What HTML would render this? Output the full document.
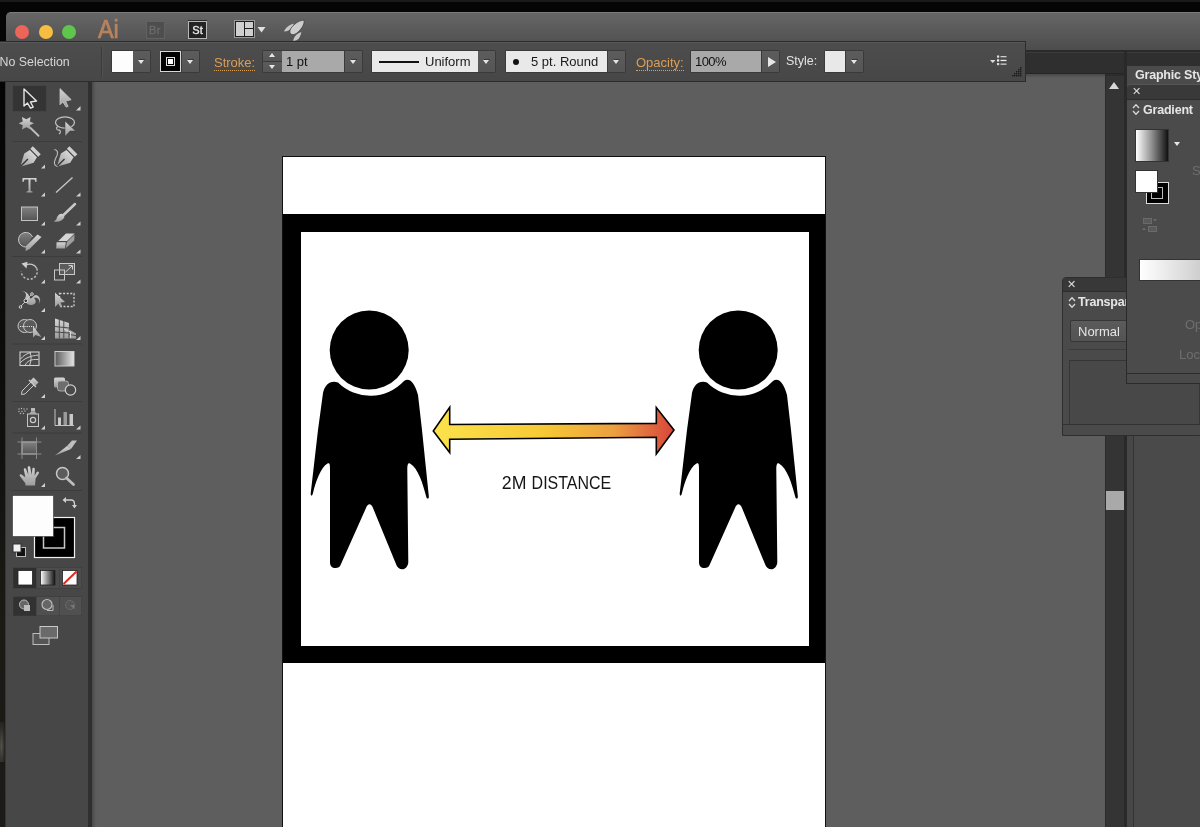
<!DOCTYPE html>
<html><head><meta charset="utf-8">
<style>
*{margin:0;padding:0;box-sizing:border-box}
html,body{width:1200px;height:827px;overflow:hidden;background:#050505;font-family:"Liberation Sans",sans-serif}
#root{position:absolute;left:0;top:0;width:1200px;height:827px;overflow:hidden;will-change:transform}
.a{position:absolute}
#title{left:6px;top:12px;width:1194px;height:38px;background:linear-gradient(#666,#4c4c4c);border-top-left-radius:5px;border-top:1px solid #7b7b7b}
.tl{width:14px;height:14px;border-radius:50%}
#ctrl{left:0;top:41px;width:1026px;height:41px;background:linear-gradient(#4d4d4d,#474747);border:1px solid #2c2c2c;border-left:none;box-shadow:inset 0 1px 0 #575757}
#tabbar{left:1026px;top:51px;width:80px;height:23px;background:#333}
#canvas{left:92px;top:74px;width:1013px;height:753px;background:#5e5e5e;box-shadow:inset 2px 2px 3px rgba(0,0,0,0.22)}
#tools{left:5px;top:82px;width:83px;height:745px;background:#474747;border-left:1px solid #363636}
.txt{color:#e2e2e2;font-size:12.5px;white-space:nowrap}
.sw{background:#fff}
.dd{background:#555;border:1px solid #333}
.grp{background:#3a3a3a;border-radius:2px}
.ddb{background:linear-gradient(#5c5c5c,#555);}
.tri{position:absolute;left:50%;top:9px;margin-left:-3.5px;width:0;height:0;border-left:3.5px solid transparent;border-right:3.5px solid transparent;border-top:4.5px solid #e6e6e6}
.ddb{box-sizing:border-box}
.nb:before{display:none}
.ddb:before{content:"";position:absolute;left:50%;top:7.5px;margin-left:-3px;width:6px;height:1px;background:#3a3a3a}
.tri.up{border-top:none;border-bottom:4.5px solid #e6e6e6}
.tri.rt{margin-left:-3px;top:6px;border-top:5px solid transparent;border-bottom:5px solid transparent;border-left:8px solid #e6e6e6;border-right:none}
.inp{background:#a9a9a9;color:#111;font-size:13px;padding:3px 0 0 4px;white-space:nowrap}
.box{background:#e9e9e9}
.dtxt{color:#1a1a1a;font-size:13px;white-space:nowrap}
.lbl{color:#dc9d55;font-size:13px;white-space:nowrap;border-bottom:1px dotted #dc9d55;line-height:15px;margin-top:1.5px}
.xx{color:#dedede;font-size:11px;line-height:14px}
.ptab{color:#e6e6e6;font-size:12.5px;font-weight:bold;white-space:nowrap;line-height:16px;letter-spacing:-0.2px}
.updn{width:7px;height:11px}
.updn:before,.updn:after{content:"";position:absolute;left:0;width:4px;height:4px;border-left:1.3px solid #ddd;border-top:1.3px solid #ddd}
.updn:before{top:1px;left:1.5px;transform:rotate(45deg)}
.updn:after{top:5px;left:1.5px;transform:rotate(-135deg)}
</style></head><body><div id="root">
<!-- title bar -->
<div class="a" style="left:0;top:0;width:1200px;height:2px;background:#1a1a1a"></div>
<div class="a" id="title"></div>
<div class="a tl" style="left:15px;top:24.5px;background:#ec6559"></div>
<div class="a tl" style="left:39px;top:24.5px;background:#f6bd42"></div>
<div class="a tl" style="left:62px;top:24.5px;background:#5fc54c"></div>
<div class="a" style="left:97.5px;top:14px;font-size:26px;color:#b9835e;-webkit-text-stroke:0.7px #b9835e;transform:scaleX(0.9);transform-origin:0 0;line-height:30px">Ai</div>
<div class="a" style="left:145.5px;top:20.5px;width:19px;height:18.5px;border:1.5px solid #626262;background:#4e4e4e;color:#6c6c6c;font-size:11px;-webkit-text-stroke:0.3px #6c6c6c;text-align:center;line-height:17px;letter-spacing:0.5px">Br</div>
<div class="a" style="left:188px;top:20.5px;width:19px;height:18.5px;border:1.5px solid #b8b8b8;background:#232323;color:#e8e8e8;font-size:11px;-webkit-text-stroke:0.35px #e8e8e8;text-align:center;line-height:16.5px;box-shadow:0 -1px 0 #2a2a2a">St</div>
<svg class="a" style="left:225px;top:14px" width="85" height="30" viewBox="225 14 85 30">
<rect x="234" y="20" width="21" height="18" fill="#9a9a9a"/>
<rect x="235" y="21" width="19" height="16" fill="#1e1e1e"/>
<rect x="236" y="22" width="8" height="14" fill="#cfcfcf"/>
<rect x="245" y="22" width="8" height="6" fill="#cfcfcf"/>
<rect x="245" y="29" width="8" height="7" fill="#cfcfcf"/>
<path d="M257.5,27 L265.5,27 L261.5,32.5 Z" fill="#e0e0e0"/>
<path d="M284,31.6 C285.5,27.5 289.5,24.5 293.8,23.8 C292.8,26.5 290.8,29 288.6,30.5 C287.2,31.2 285.6,31.6 284,31.6 Z" fill="#c8c8c8"/>
<path d="M293.2,41 C293.8,37 296.5,33.5 301.3,32 C301,35 299.6,38 297.6,39.6 C296.2,40.6 294.6,41 293.2,41 Z" fill="#c8c8c8"/>
<g transform="translate(296.5,28) rotate(-45)">
<path d="M10.8,0 C8,-3.2 3,-4.2 -2,-4 C-6,-3.7 -8.2,-2 -8.2,0 C-8.2,2 -6,3.7 -2,4 C3,4.2 8,3.2 10.8,0 Z" fill="#cdcdcd" stroke="#3e3e3e" stroke-width="0.7"/>
</g>
</svg>

<!-- canvas + right side -->
<div class="a" style="left:88px;top:74px;width:4px;height:753px;background:#2f2f2f"></div>
<div class="a" id="canvas"></div>
<div class="a" style="left:1026px;top:50px;width:174px;height:2px;background:#2a2a2a"></div>
<div class="a" style="left:1026px;top:52px;width:174px;height:22px;background:#2f2f2f;border-top:1px solid #3c3c3c;border-bottom:1px solid #262626"></div>
<div class="a" style="left:1105px;top:74px;width:19px;height:753px;background:#343434;border-left:1px solid #2c2c2c;border-top:2px solid #2c2c2c"></div>
<div class="a" style="left:1109px;top:82px;width:0;height:0;border-left:5.5px solid transparent;border-right:5.5px solid transparent;border-bottom:7px solid #d8d8d8"></div>
<div class="a" style="left:1106px;top:491px;width:18px;height:19px;background:#a9a9a9"></div>
<div class="a" style="left:1124px;top:50px;width:3px;height:777px;background:#292929"></div>
<div class="a" style="left:1127px;top:74px;width:73px;height:753px;background:#4a4a4a"></div>
<div class="a" style="left:1127px;top:383px;width:7px;height:444px;background:#474747;border-right:1px solid #333"></div>
<!-- transparency panel -->
<div class="a" style="left:1062px;top:277px;width:138px;height:159px;background:#4a4a4a;border:1px solid #2e2e2e;border-top-left-radius:4px"></div>
<div class="a" style="left:1063px;top:278px;width:137px;height:14px;background:#383838;border-top-left-radius:3px;border-bottom:1px solid #2c2c2c"></div>
<div class="a xx" style="left:1067px;top:277px">&#x2715;</div>
<svg class="a" style="left:1067.5px;top:295.5px" width="8" height="13" viewBox="0 0 8 13"><path d="M1,5 L4,1.8 L7,5 M1,8 L4,11.2 L7,8" fill="none" stroke="#d8d8d8" stroke-width="1.3"/></svg>
<div class="a ptab" style="left:1078px;top:294px">Transparency</div>
<div class="a" style="left:1070px;top:320px;width:80px;height:22px;background:linear-gradient(#5b5b5b,#535353);border:1px solid #363636;border-radius:2px;color:#e4e4e4;font-size:13px;padding:3px 0 0 7px">Normal</div>
<div class="a" style="left:1068px;top:349px;width:132px;height:1px;background:#3c3c3c"></div>
<div class="a" style="left:1069px;top:360px;width:131px;height:65px;background:#484848;border:1px solid #353535"></div>
<div class="a" style="left:1063px;top:424px;width:137px;height:11px;background:#4a4a4a;border-top:1px solid #333"></div>
<!-- gradient panel -->
<div class="a" style="left:1126px;top:66px;width:74px;height:318px;background:#4b4b4b;border-left:1px solid #2a2a2a;border-bottom:1px solid #2a2a2a"></div>
<div class="a ptab" style="left:1135px;top:67px">Graphic Styles</div>
<div class="a" style="left:1127px;top:84px;width:73px;height:16px;background:#393939;border-top-left-radius:4px;border-top:1px solid #555;border-bottom:1px solid #2c2c2c"></div>
<div class="a xx" style="left:1132px;top:84px">&#x2715;</div>
<svg class="a" style="left:1132px;top:103px" width="8" height="13" viewBox="0 0 8 13"><path d="M1,5 L4,1.8 L7,5 M1,8 L4,11.2 L7,8" fill="none" stroke="#d8d8d8" stroke-width="1.3"/></svg>
<div class="a ptab" style="left:1143px;top:102px">Gradient</div>
<div class="a" style="left:1135px;top:129px;width:34px;height:33px;background:linear-gradient(90deg,#fff 0%,#9a9a9a 45%,#111 100%);border:1px solid #333"></div>
<div class="a" style="left:1174px;top:142px;width:0;height:0;border-left:3.5px solid transparent;border-right:3.5px solid transparent;border-top:4px solid #e6e6e6"></div>
<div class="a" style="left:1146px;top:182px;width:23px;height:22px;background:#000;border:1px solid #ddd"></div>
<div class="a" style="left:1151px;top:187px;width:12px;height:12px;border:1.5px solid #bbb"></div>
<div class="a" style="left:1135px;top:170px;width:23px;height:23px;background:#fff;border:1px solid #333"></div>
<svg class="a" style="left:1140px;top:214px" width="24" height="22" viewBox="0 0 24 22">
<rect x="3.5" y="4.5" width="8" height="5" fill="#5a5a5a" stroke="#6a6a6a"/><path d="M13,5 L17,5 L15,7.5 Z" fill="#6a6a6a"/>
<rect x="8.5" y="12.5" width="8" height="5" fill="#5a5a5a" stroke="#6a6a6a"/><path d="M2,16 L6,16 L4,13.5 Z" fill="#6a6a6a"/>
</svg>
<div class="a" style="left:1192px;top:163px;color:#6e6e6e;font-size:13px">St</div>
<div class="a" style="left:1139px;top:259px;width:61px;height:22px;background:linear-gradient(90deg,#fff,#cfcfcf);border:1px solid #333;border-right:none"></div>
<div class="a" style="left:1185px;top:317px;color:#6e6e6e;font-size:13px">Op</div>
<div class="a" style="left:1179px;top:347px;color:#6e6e6e;font-size:13px">Loc</div>
<div class="a" style="left:1127px;top:373px;width:73px;height:10px;background:#4a4a4a;border-top:1px solid #2c2c2c"></div>

<!-- toolbar -->
<div class="a" style="left:0;top:82px;width:5px;height:745px;background:linear-gradient(#050505 0%,#0d0d0b 40%,#1a1914 70%,#1c1b17 100%)"></div>
<div class="a" style="left:0;top:722px;width:5px;height:40px;background:radial-gradient(ellipse at 30% 60%,#55534d 0%,#2a2925 60%,rgba(28,27,23,0) 100%)"></div>

<div class="a" id="tools"></div>
<svg class="a" style="left:0;top:82px" width="92" height="745" viewBox="0 82 92 745">
<defs>
<linearGradient id="ig" x1="0" y1="0" x2="0" y2="1"><stop offset="0" stop-color="#d6d6d6"/><stop offset="1" stop-color="#9c9c9c"/></linearGradient>
<linearGradient id="gg" x1="0" y1="0" x2="1" y2="0"><stop offset="0" stop-color="#5a5a5a"/><stop offset="1" stop-color="#e6e6e6"/></linearGradient>
<linearGradient id="bw" x1="0" y1="0" x2="1" y2="0"><stop offset="0" stop-color="#ffffff"/><stop offset="1" stop-color="#111"/></linearGradient>
<linearGradient id="rg" x1="0" y1="0" x2="0" y2="1"><stop offset="0" stop-color="#808080"/><stop offset="1" stop-color="#555"/></linearGradient>
</defs>
<g fill="#d0d0d0" id="corners">
<path d="M41,168.5 L45,168.5 L45,164.5 Z"/>
<path d="M76,110.5 L80.5,110.5 L80.5,106 Z"/>
<path d="M76,196.5 L80.5,196.5 L80.5,192.5 Z"/><path d="M41,196.5 L45,196.5 L45,192.5 Z"/>
<path d="M41,225.5 L45,225.5 L45,221.5 Z"/><path d="M76,225.5 L80.5,225.5 L80.5,221.5 Z"/>
<path d="M41,253.5 L45,253.5 L45,249.5 Z"/><path d="M76,253.5 L80.5,253.5 L80.5,249.5 Z"/>
<path d="M41,283.5 L45,283.5 L45,279.5 Z"/><path d="M76,283.5 L80.5,283.5 L80.5,279.5 Z"/>
<path d="M41,312 L45,312 L45,308 Z"/>
<path d="M41,340 L45,340 L45,336 Z"/><path d="M76,340 L80.5,340 L80.5,336 Z"/>
<path d="M41,398 L45,398 L45,394 Z"/>
<path d="M41,429.5 L45,429.5 L45,425.5 Z"/><path d="M76,429.5 L80.5,429.5 L80.5,425.5 Z"/>
<path d="M76,459 L80.5,459 L80.5,455 Z"/>
<path d="M41,487 L45,487 L45,483 Z"/>
</g>
<!-- separators -->
<g fill="#3c3c3c"><rect x="12" y="141" width="70" height="1"/><rect x="12" y="256" width="70" height="1"/><rect x="12" y="343.5" width="70" height="1"/><rect x="12" y="401" width="70" height="1"/><rect x="12" y="432.5" width="70" height="1"/><rect x="12" y="490" width="70" height="1"/></g>
<!-- selection -->
<rect x="13" y="86" width="33" height="25" fill="#343434" stroke="#3a3a3a" stroke-width="0.5"/>
<path d="M24,89 L24,106 L27.5,103 L30.5,108.2 L33.2,107 L30.4,102 L36.5,101 Z" fill="#2e2e2e" stroke="#e4e4e4" stroke-width="1.4" stroke-linejoin="round"/>
<path d="M60,88.6 L60,104.7 L62.8,101.9 L66.2,107.1 L68.1,106.4 L65.6,101.1 L71.2,99.7 Z" fill="url(#ig)" stroke="#c8c8c8" stroke-width="0.8" stroke-linejoin="round"/>
<!-- magic wand -->
<path d="M30,127.5 L38.5,135.8" stroke="#bdbdbd" stroke-width="1.9" stroke-linecap="round"/>
<path d="M33.90,123.30 L29.85,125.15 L30.66,129.53 L26.30,127.30 L21.94,129.53 L22.75,125.15 L18.70,123.30 L22.75,121.45 L21.94,117.07 L26.30,119.30 L30.66,117.07 L29.85,121.45 Z" fill="url(#ig)"/>
<!-- lasso -->
<ellipse cx="65" cy="122.5" rx="9.5" ry="5.6" fill="none" stroke="#c4c4c4" stroke-width="1.2"/>
<path d="M57.5,126.5 C55.5,128.5 57,130.5 59.5,130 C61,131.5 60.5,133 59,134" fill="none" stroke="#c4c4c4" stroke-width="1.1"/>
<path d="M65,121 L75.5,131 L70,131 L65,136.5 Z" fill="url(#ig)" stroke="#3a3a3a" stroke-width="0.5"/>
<!-- pen -->
<g transform="translate(28.6,158.4) rotate(45)">
<path d="M0,11.8 L-6.6,-0.5 L-5,-6.8 L5,-6.8 L6.6,-0.5 Z" fill="url(#ig)"/>
<path d="M0,11.5 L0,1" stroke="#363636" stroke-width="1.4"/>
<rect x="-5.6" y="-11.6" width="11.2" height="3.6" fill="#cfcfcf"/>
</g>
<g transform="translate(65.2,158.4) rotate(45)">
<path d="M0,11.8 L-6.6,-0.5 L-5,-6.8 L5,-6.8 L6.6,-0.5 Z" fill="url(#ig)"/>
<path d="M0,11.5 L0,1" stroke="#363636" stroke-width="1.4"/>
<rect x="-5.6" y="-11.6" width="11.2" height="3.6" fill="#cfcfcf"/>
</g>
<path d="M54.3,149.5 C57,150 58.5,152 57,155.5 C54.5,160 52.5,165 57.5,166.5" fill="none" stroke="#bdbdbd" stroke-width="1.1"/>
<!-- type -->
<path d="M22.5,178 L36.5,178 L36.5,182 L35.5,182 L34.5,179.5 L30.5,179.5 L30.5,191 L32.5,191.5 L32.5,192.5 L26.5,192.5 L26.5,191.5 L28.5,191 L28.5,179.5 L24.5,179.5 L23.5,182 L22.5,182 Z" fill="url(#ig)"/>
<path d="M56,192.5 L72.5,177.5" stroke="#c8c8c8" stroke-width="1.3"/>
<!-- rect -->
<rect x="21.5" y="207" width="16" height="13.5" fill="url(#rg)" stroke="#c4c4c4" stroke-width="1"/>
<!-- brush -->
<path d="M75,204 L63,215.5" stroke="#c8c8c8" stroke-width="2.5" stroke-linecap="round"/>
<path d="M62.5,214 C59,213 57,217 56.5,219 C55.5,220.5 54,221 54,221.5 C58,222.5 63,221 64.5,217 Z" fill="url(#ig)"/>
<!-- shaper -->
<path d="M26,247 A7.3,7.3 0 1 1 32.5,236.8" fill="url(#rg)" stroke="#c8c8c8" stroke-width="1"/>
<path d="M25.5,251 L26,246 L37.5,234.5 L41.5,237 L29.5,249 Z" fill="url(#ig)"/>
<!-- eraser -->
<path d="M58.3,241 L66,233.4 L74.6,233.4 L67,241 Z" fill="#d4d4d4"/>
<path d="M56.6,242.2 L65.8,242.2 L65,248.6 L56.2,248.6 Z" fill="url(#ig)"/>
<path d="M66.8,242 L74.6,234.5 L74.2,240.5 L66,248 Z" fill="#9e9e9e"/>
<!-- rotate -->
<path d="M36.8,268.5 A8,8 0 1 1 21.3,271.5" fill="none" stroke="#bdbdbd" stroke-width="1.4" stroke-dasharray="2.2,1.7"/>
<path d="M25.5,265.3 A8,8 0 0 1 36.8,268.5" fill="none" stroke="#c8c8c8" stroke-width="1.4"/>
<path d="M21.5,263.5 L27.5,261.8 L26.5,268.5 Z" fill="#cfcfcf"/>
<!-- scale -->
<rect x="59.5" y="263.5" width="15" height="11" fill="#5b5b5b" stroke="#c8c8c8" stroke-width="1"/>
<rect x="54.5" y="270" width="10" height="10" fill="none" stroke="#c8c8c8" stroke-width="1"/>
<path d="M65.5,272 L72,266" stroke="#d0d0d0" stroke-width="1"/><path d="M68.5,265.5 L72.5,265.5 L72.5,269.5" fill="none" stroke="#d0d0d0" stroke-width="1"/>
<!-- puppet warp -->
<path d="M22,292 C25,291 27,294 25.5,297 C24.5,300 26,305 31,305 C36,305 37,301 34,298 C38,297 40,300 39.5,304 C41,300 40,296 36,295 C33,295 32,300 30,298 C29,295 26,290 22,292 Z" fill="url(#ig)"/>
<circle cx="25.8" cy="300.8" r="1.8" fill="#333" stroke="#e0e0e0" stroke-width="1"/>
<circle cx="20.5" cy="307" r="1.3" fill="none" stroke="#e0e0e0" stroke-width="0.9"/>
<circle cx="32" cy="294" r="1.3" fill="none" stroke="#e0e0e0" stroke-width="0.9"/>
<path d="M21,306 L25,302 M27,299 L31,295" stroke="#ddd" stroke-width="0.8"/>
<!-- free transform -->
<rect x="59.5" y="293.5" width="14.5" height="13" fill="none" stroke="#d0d0d0" stroke-width="1.3" stroke-dasharray="2,1.6"/>
<path d="M55,292.5 L55,307 L58.5,303.5 L60.5,307 L62,306 L60.5,302.5 L65,302 Z" fill="url(#ig)"/>
<!-- shape builder -->
<circle cx="24.5" cy="326" r="6.5" fill="#5a5a5a" stroke="#c8c8c8" stroke-width="1"/>
<circle cx="30" cy="326" r="6.5" fill="#5a5a5a" stroke="#c8c8c8" stroke-width="1"/>
<path d="M20,326.5 L34,326.5" stroke="#e0e0e0" stroke-width="1" stroke-dasharray="1.2,1"/>
<path d="M33,326 L33,337.5 L35.5,335 L41.5,337 Z" fill="url(#ig)"/>
<!-- perspective grid -->
<path d="M55,318.5 L69,323 L69,329.5 L76,333.5 L76,338.5 L55,338.5 Z" fill="url(#ig)"/>
<path d="M59.3,319.5 L59.3,338.5 M63.8,321 L63.8,338.5 M55,326.5 L69,328 M55,332 L69,333 M69,334.5 L76,335.5 M69,329.5 L69,338.5" stroke="#4a4a4a" stroke-width="1"/>
<path d="M64,329 L70.5,332 L70.5,338" fill="none" stroke="#e0e0e0" stroke-width="0.9"/>
<!-- mesh -->
<rect x="20" y="352" width="19" height="13.5" fill="#4a4a4a" stroke="#d0d0d0" stroke-width="1.1"/>
<path d="M20.5,359 C24,355 27,353.5 31,352.5 M20.5,362.5 C25,358 30,356 38.5,355 M25,365.5 C27,361 31,359 38.5,359.5 M30,352.3 C31.5,356 31.5,361 29.5,365.5" fill="none" stroke="#d0d0d0" stroke-width="1"/>
<!-- gradient -->
<rect x="55" y="351.5" width="19" height="14.5" fill="url(#gg)" stroke="#ccc" stroke-width="1"/>
<!-- eyedropper -->
<path d="M21.5,394.5 L22,391 L31,382 L34,385 L25,394 Z" fill="#4a4a4a" stroke="#c8c8c8" stroke-width="1"/>
<path d="M30,381 L33.5,377.5 L38.5,382.5 L35,386 Z" fill="url(#ig)"/>
<path d="M29,380 L36,387" stroke="#c8c8c8" stroke-width="1.5"/>
<!-- blend -->
<rect x="54" y="377.5" width="11" height="10" rx="1.5" fill="url(#ig)"/>
<rect x="57.5" y="381" width="11" height="10" rx="2.5" fill="#6d6d6d" stroke="#bbb" stroke-width="0.8"/>
<circle cx="70.5" cy="390" r="5.2" fill="#4a4a4a" stroke="#d0d0d0" stroke-width="1.2"/>
<!-- symbol sprayer -->
<rect x="27.5" y="414" width="11" height="12.5" fill="#4a4a4a" stroke="#c4c4c4" stroke-width="1"/>
<circle cx="33" cy="420" r="2.6" fill="none" stroke="#c8c8c8" stroke-width="1.2"/>
<rect x="31" y="408" width="4" height="3.5" fill="#bbb"/><path d="M29,414 L31,411.5 L35,411.5 L37,414" fill="#aaa"/>
<g fill="#bdbdbd"><circle cx="19" cy="409" r="0.7"/><circle cx="21.5" cy="408.5" r="0.7"/><circle cx="24" cy="409" r="0.7"/><circle cx="27" cy="409" r="0.7"/><circle cx="19" cy="411.5" r="0.7"/><circle cx="22" cy="411.5" r="0.7"/><circle cx="25" cy="411" r="0.7"/><circle cx="20.5" cy="413.5" r="0.7"/><circle cx="23.5" cy="413.5" r="0.7"/></g>
<!-- column graph -->
<path d="M55,409 L55,425.5 L74,425.5" fill="none" stroke="#c4c4c4" stroke-width="1"/>
<rect x="58" y="417.5" width="3" height="7.5" fill="#c8c8c8"/><rect x="63.5" y="412" width="3.5" height="13" fill="#9a9a9a"/><rect x="69.5" y="414" width="3.5" height="11" fill="#c8c8c8"/>
<!-- artboard -->
<rect x="22" y="442" width="14.5" height="12" fill="url(#rg)" stroke="#c4c4c4" stroke-width="1"/>
<path d="M17.5,442 L41.5,442 M17.5,454 L41.5,454 M22,437.5 L22,459 M36.5,437.5 L36.5,459" stroke="#8a8a8a" stroke-width="1"/>
<!-- slice -->
<path d="M55,455.5 L67,446 L71,449 Z" fill="url(#ig)"/>
<path d="M67,446 L72,440.5 L77,440.5 L71,449 Z" fill="#bfbfbf"/>
<!-- hand -->
<path d="M25.6,485.5 L35,485.5 L35.6,478.5 L38.9,473.3 C39.5,471.8 37.6,470.8 36.8,472 L34.6,475.8 L34.8,469.2 C34.8,467.3 32.4,467.3 32.3,469.2 L31.7,475 L30.3,467.6 C30,465.8 27.7,465.8 27.7,467.7 L28.4,475 L26.2,469.2 C25.6,467.5 23.4,468 23.8,469.8 L25.3,477.3 L21.6,474.5 C20.3,473.5 19.1,474.8 19.8,476 L25.3,483.2 Z" fill="url(#ig)"/>
<!-- zoom -->
<circle cx="62.5" cy="473.5" r="6" fill="#5b5b5b" stroke="#c8c8c8" stroke-width="1.5"/>
<path d="M66.5,478 L73.5,484.5" stroke="#bdbdbd" stroke-width="2.8" stroke-linecap="round"/>
<!-- fill/stroke -->
<rect x="34.5" y="517.5" width="40" height="40" fill="#000" stroke="#f0f0f0" stroke-width="1.2"/>
<rect x="43.5" y="527.5" width="21" height="20.5" fill="none" stroke="#c8c8c8" stroke-width="1.5"/>
<rect x="12.5" y="495.5" width="41" height="41" fill="#fdfdfd" stroke="#333" stroke-width="0.6"/>
<path d="M65,500 L71,500 C73.5,500 74.5,501.5 74.5,504 L74.5,505" fill="none" stroke="#cfcfcf" stroke-width="1.3"/>
<path d="M62.5,500 L66,497 L66,503 Z M72,505 L77,505 L74.5,508.5 Z" fill="#cfcfcf"/>
<rect x="16.5" y="547.5" width="9" height="9" fill="#111" stroke="#bbb" stroke-width="1"/>
<rect x="13" y="544" width="8" height="8" fill="#f2f2f2" stroke="#333" stroke-width="1"/>
<!-- color buttons -->
<rect x="13" y="567.5" width="69" height="21" fill="#3b3b3b"/>
<rect x="13.5" y="568" width="22.5" height="20" fill="#2f2f2f"/>
<rect x="36.5" y="568" width="22.5" height="20" fill="#4c4c4c"/>
<rect x="59.5" y="568" width="22" height="20" fill="#4c4c4c"/>
<rect x="18" y="570.5" width="14.5" height="14.5" fill="#fff" stroke="#222" stroke-width="0.8"/>
<rect x="40.5" y="570.5" width="14.5" height="14.5" fill="url(#bw)" stroke="#222" stroke-width="0.8"/>
<rect x="62.5" y="570.5" width="14.5" height="14.5" fill="#fff" stroke="#222" stroke-width="0.8"/>
<path d="M63.5,584 L76.5,571.5" stroke="#e02a1f" stroke-width="2"/>
<!-- draw modes -->
<rect x="13" y="596.5" width="69" height="19.5" fill="#3b3b3b"/>
<rect x="13.5" y="597" width="22.5" height="18.5" fill="#323232"/>
<rect x="36.5" y="597" width="22.5" height="18.5" fill="#505050"/>
<rect x="59.5" y="597" width="22" height="18.5" fill="#505050"/>
<circle cx="24" cy="604.5" r="4.5" fill="#666" stroke="#bbb" stroke-width="1"/><rect x="24" y="605" width="6" height="6" fill="#bdbdbd"/>
<circle cx="47" cy="604.5" r="5" fill="#666" stroke="#bbb" stroke-width="1.2"/><path d="M47,610.5 L53,610.5 L53,605" fill="none" stroke="#bbb" stroke-width="1"/>
<circle cx="70" cy="605" r="4.5" fill="#555" stroke="#6a6a6a" stroke-width="1"/><path d="M70,605 L74.5,605 L74.5,609.5" fill="#777"/>
<!-- screen mode -->
<rect x="33" y="633.5" width="16" height="11" fill="#555" stroke="#bdbdbd" stroke-width="1"/>
<rect x="40" y="626.5" width="17.5" height="11.5" fill="#6a6a6a" stroke="#c8c8c8" stroke-width="1"/>
</svg>


<!-- control bar -->
<div class="a" id="ctrl"></div>
<div class="a txt" style="left:-0.5px;top:55px;font-size:12.4px;color:#d6d6d6">No Selection</div>
<div class="a" style="left:101px;top:47px;width:1px;height:30px;background:#3a3a3a"></div>
<div class="a" style="left:102px;top:47px;width:1px;height:30px;background:#525252"></div>
<!-- fill -->
<div class="a grp" style="left:111px;top:50px;width:40px;height:23px"></div>
<div class="a" style="left:112px;top:51px;width:21px;height:21px;background:#fdfdfd"></div>
<div class="a ddb" style="left:133px;top:51px;width:17px;height:21px"><i class="tri"></i></div>
<!-- stroke -->
<div class="a grp" style="left:160px;top:50px;width:40px;height:23px"></div>
<div class="a" style="left:160px;top:51px;width:21px;height:21px;background:#000;border:1px solid #d8d8d8"></div>
<div class="a" style="left:166px;top:57px;width:9px;height:9px;border:1px solid #ddd;background:#000"></div>
<div class="a" style="left:168px;top:59px;width:5px;height:5px;background:#fff"></div>
<div class="a ddb" style="left:182px;top:51px;width:17px;height:21px"><i class="tri"></i></div>
<div class="a lbl" style="left:214px;top:53px">Stroke:</div>
<!-- stepper -->
<div class="a grp" style="left:262px;top:50px;width:101px;height:23px"></div>
<div class="a ddb nb" style="left:263px;top:51px;width:19px;height:10px"><i class="tri up" style="top:2px"></i></div>
<div class="a ddb nb" style="left:263px;top:62px;width:19px;height:10px"><i class="tri" style="top:3px"></i></div>
<div class="a inp" style="left:282px;top:51px;width:62px;height:21px">1 pt</div>
<div class="a ddb" style="left:345px;top:51px;width:17px;height:21px"><i class="tri"></i></div>
<!-- uniform -->
<div class="a grp" style="left:371px;top:50px;width:125px;height:23px"></div>
<div class="a box" style="left:372px;top:51px;width:106px;height:21px"></div>
<div class="a" style="left:379px;top:61px;width:40px;height:2px;background:#111"></div>
<div class="a dtxt" style="left:425px;top:54px">Uniform</div>
<div class="a ddb" style="left:478px;top:51px;width:17px;height:21px"><i class="tri"></i></div>
<!-- 5pt -->
<div class="a grp" style="left:505px;top:50px;width:121px;height:23px"></div>
<div class="a box" style="left:506px;top:51px;width:101px;height:21px"></div>
<div class="a" style="left:513px;top:59px;width:6px;height:6px;border-radius:50%;background:#111"></div>
<div class="a dtxt" style="left:531px;top:54px">5 pt. Round</div>
<div class="a ddb" style="left:608px;top:51px;width:17px;height:21px"><i class="tri"></i></div>
<div class="a lbl" style="left:636px;top:53px">Opacity:</div>
<!-- opacity -->
<div class="a grp" style="left:690px;top:50px;width:90px;height:23px"></div>
<div class="a inp" style="left:691px;top:51px;width:70px;height:21px;letter-spacing:-0.6px">100%</div>
<div class="a ddb nb" style="left:762px;top:51px;width:17px;height:21px"><i class="tri rt"></i></div>
<div class="a txt" style="left:786px;top:54px">Style:</div>
<div class="a grp" style="left:824px;top:50px;width:40px;height:23px"></div>
<div class="a" style="left:825px;top:51px;width:20px;height:21px;background:#e8e8e8"></div>
<div class="a ddb" style="left:846px;top:51px;width:17px;height:21px"><i class="tri"></i></div>

<svg class="a" style="left:985px;top:50px" width="40" height="30" viewBox="985 50 40 30">
<path d="M990,60 L995.5,60 L992.75,63 Z" fill="#ddd"/>
<rect x="997" y="55.5" width="2.2" height="2.2" fill="#e0e0e0"/><rect x="1000.5" y="56" width="6" height="1.3" fill="#ccc"/>
<rect x="997" y="59.3" width="2.2" height="2.2" fill="#f0f0f0"/><rect x="1000.5" y="59.8" width="6" height="1.3" fill="#eee"/>
<rect x="997" y="63" width="2.2" height="2.2" fill="#d8d8d8"/><rect x="1000.5" y="63.5" width="6" height="1.3" fill="#ccc"/>
<g fill="#1a1a1a"><rect x="1020" y="67" width="1.4" height="1.4"/><rect x="1018" y="69" width="1.4" height="1.4"/><rect x="1020" y="69" width="1.4" height="1.4"/><rect x="1016" y="71" width="1.4" height="1.4"/><rect x="1018" y="71" width="1.4" height="1.4"/><rect x="1020" y="71" width="1.4" height="1.4"/><rect x="1014" y="73" width="1.4" height="1.4"/><rect x="1016" y="73" width="1.4" height="1.4"/><rect x="1018" y="73" width="1.4" height="1.4"/><rect x="1020" y="73" width="1.4" height="1.4"/><rect x="1012" y="75" width="1.4" height="1.4"/><rect x="1014" y="75" width="1.4" height="1.4"/><rect x="1016" y="75" width="1.4" height="1.4"/><rect x="1018" y="75" width="1.4" height="1.4"/><rect x="1020" y="75" width="1.4" height="1.4"/></g>
</svg>
<!-- artboard -->
<div class="a" style="left:282px;top:156px;width:544px;height:680px;background:#fff;border:1px solid #111"></div>
<div class="a" style="left:283px;top:214px;width:542px;height:449px;background:#000"></div>
<div class="a" style="left:301px;top:232px;width:507.5px;height:413.5px;background:#fff"></div>
<svg class="a" style="left:0;top:0" width="1200" height="827" viewBox="0 0 1200 827">
<defs>
<linearGradient id="ag" x1="433" y1="0" x2="674" y2="0" gradientUnits="userSpaceOnUse">
<stop offset="0" stop-color="#fbe24c"/><stop offset="0.45" stop-color="#f6ca36"/><stop offset="0.75" stop-color="#eba040"/><stop offset="1" stop-color="#d9453a"/>
</linearGradient>
<g id="fig">
<circle cx="369.2" cy="350" r="39.5"/>
<path d="M338,382.5 A46,46 0 0 0 404,381 C410,377 415,384 418,395 L422,430 L428.8,496 C429.2,499 427,499.5 426.3,497 C423,484 418,468 410,463.5 C408,462.5 407.3,464.5 407.3,470 L408.3,562 C408.3,566 405.5,569.3 402.3,569.3 C399.3,569.3 397.5,567.5 396.5,565.3 L373,508 C371,503 368,503 366,508 L341,564 C340,567 338,568 335.5,568 C332,568 330,566 330,562 L330,470 C330,465 330,462.5 327.5,463.5 C321,467 315.5,482 313,493 C312.3,496.5 310.3,496.5 310.8,492.5 L318,430 L323,393 C325,385 330,380 338,382.5 Z"/>
</g>
</defs>
<use href="#fig"/>
<use href="#fig" x="369"/>
<path d="M433.3,431 L449.7,407.3 L449.7,424.5 L656.3,423.4 L656.3,407.6 L674,429.9 L656.3,454 L656.3,437.2 L449.7,439.2 L449.7,452.6 Z" fill="url(#ag)" stroke="#000" stroke-width="1.6" stroke-linejoin="miter"/>
<text x="501.8" y="488.9" font-family="Liberation Sans" font-size="18" fill="#151515" textLength="24.6" lengthAdjust="spacingAndGlyphs">2M</text><text x="531.6" y="488.9" font-family="Liberation Sans" font-size="18" fill="#151515" textLength="79.6" lengthAdjust="spacingAndGlyphs">DISTANCE</text>
</svg>
</div></body></html>
